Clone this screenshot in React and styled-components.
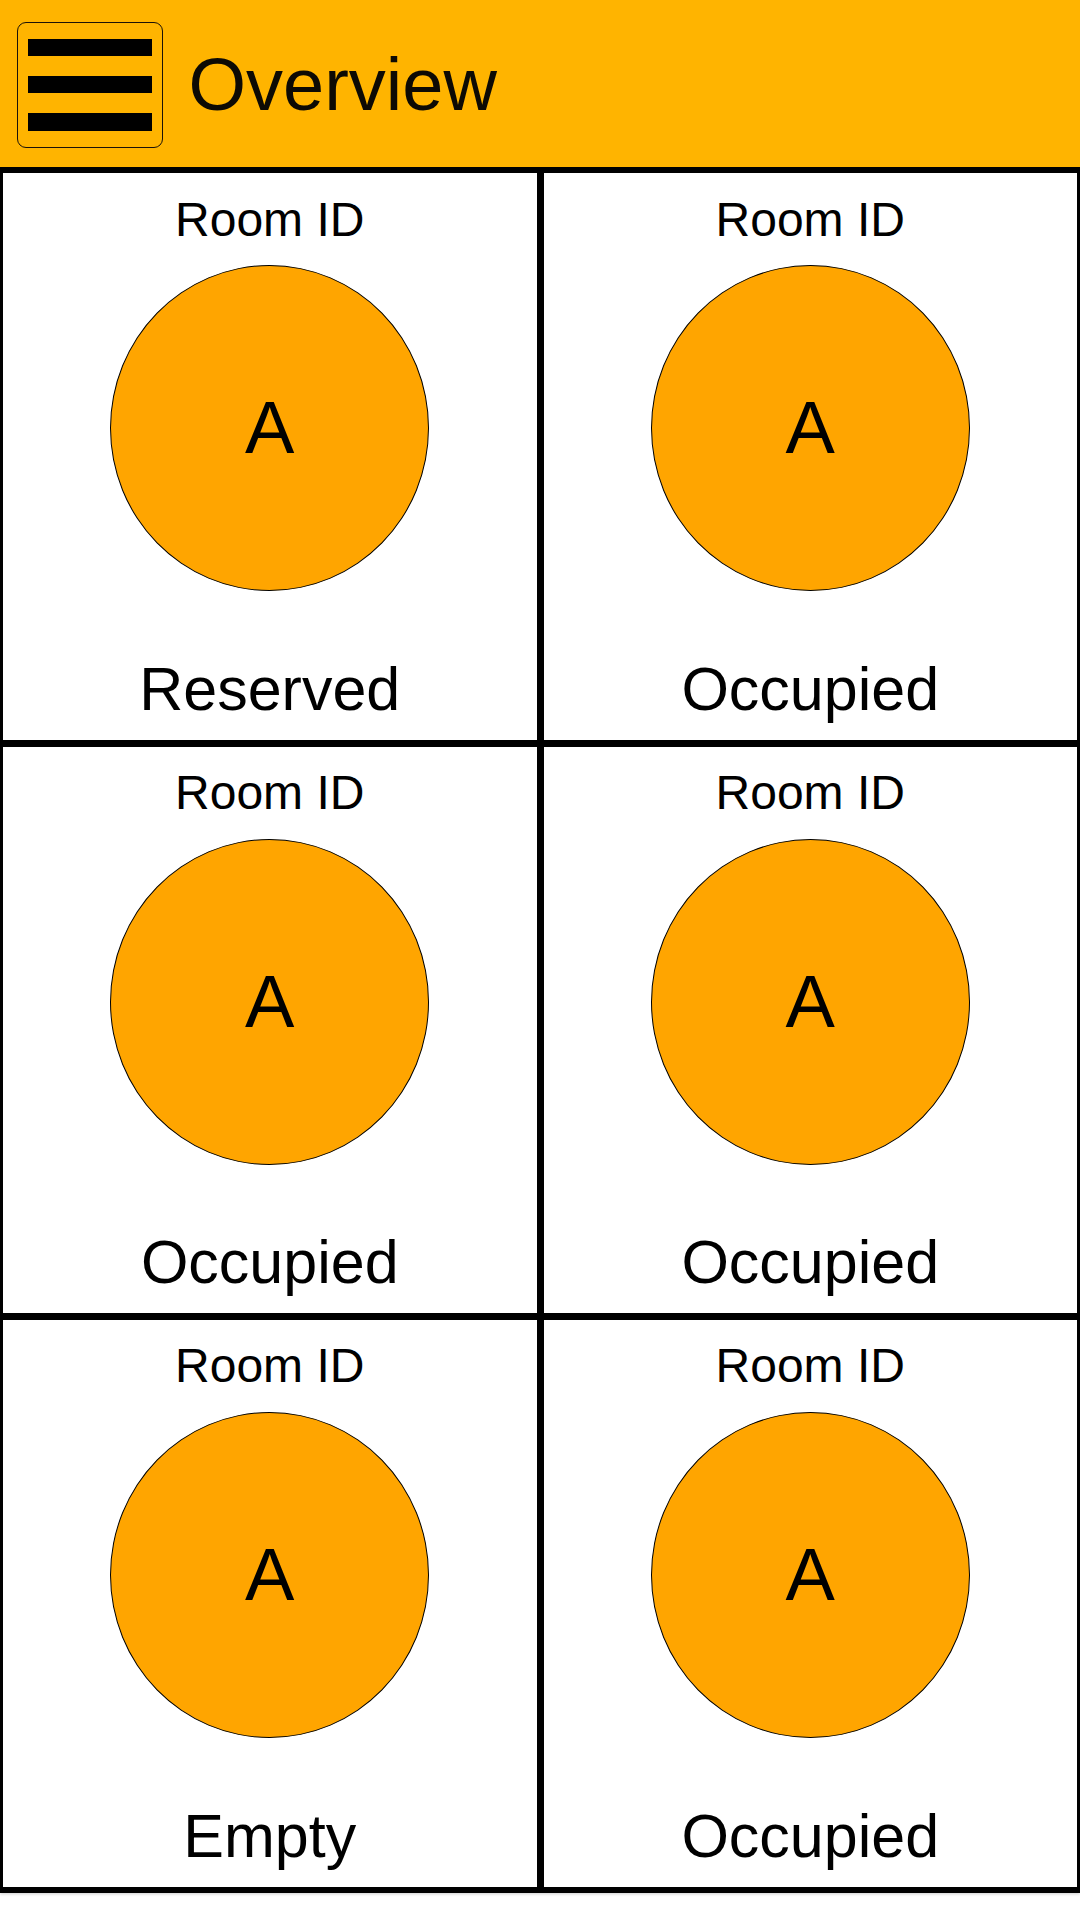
import React from "react";
import styled, { createGlobalStyle } from "styled-components";

const GlobalStyle = createGlobalStyle`
	html, body {
		margin: 0;
		padding: 0;
		background: #ffffff;
		font-family: "Liberation Sans", Arial, sans-serif;
	}
`;

const rooms = [
	{ id: 1, letter: "A", status: "Reserved" },
	{ id: 2, letter: "A", status: "Occupied" },
	{ id: 3, letter: "A", status: "Occupied" },
	{ id: 4, letter: "A", status: "Occupied" },
	{ id: 5, letter: "A", status: "Empty" },
	{ id: 6, letter: "A", status: "Occupied" },
];

const App = () => {
	return (
		<Page>
			<GlobalStyle />
			<Header>
				<MenuButton aria-label="menu">
					<Bar />
					<Bar />
					<Bar />
				</MenuButton>
				<Title>Overview</Title>
			</Header>
			<Grid>
				{rooms.map((room) => (
					<Cell key={room.id}>
						<RoomId>Room ID</RoomId>
						<Circle>{room.letter}</Circle>
						<Status>{room.status}</Status>
					</Cell>
				))}
			</Grid>
		</Page>
	);
};

const Page = styled.div`
	width: 1080px;
	min-height: 1921px;
	background: #ffffff;
`;

const Header = styled.header`
	position: relative;
	z-index: 1;
	height: 166.67px;
	box-sizing: border-box;
	display: flex;
	align-items: center;
	gap: 26px;
	padding: 3px 0 0 16.5px;
	background-color: #ffb400;
	box-shadow: 0 2px 4px rgba(0, 0, 0, 0.3);
`;

const MenuButton = styled.button`
	width: 146px;
	height: 126px;
	box-sizing: border-box;
	display: flex;
	flex-direction: column;
	justify-content: center;
	gap: 20px;
	padding: 0 10px;
	background: transparent;
	border: 1.5px solid #1a1208;
	border-radius: 9px;
`;

const Bar = styled.span`
	display: block;
	height: 17.33px;
	background: #000000;
`;

const Title = styled.h1`
	margin: 0;
	font-size: 74px;
	font-weight: normal;
	line-height: 74px;
	color: #0d0a04;
`;

const Grid = styled.main`
	display: grid;
	grid-template-columns: 1fr 1fr;
	grid-auto-rows: 566.67px;
	column-gap: 7px;
	row-gap: 6.67px;
	padding: 6.67px 3px;
	background: #000000;
	box-shadow: 0 1px 3px rgba(0, 0, 0, 0.2);
`;

const Cell = styled.section`
	display: flex;
	flex-direction: column;
	align-items: center;
	padding: 22.4px 0 20px;
	box-sizing: border-box;
	background: #ffffff;
	color: #000000;
`;

const RoomId = styled.div`
	font-size: 48px;
	line-height: 48px;
`;

const Circle = styled.div`
	width: 319px;
	height: 326px;
	margin-top: 21.7px;
	box-sizing: border-box;
	border: 1px solid #000000;
	border-radius: 50%;
	background: #ffa500;
	display: flex;
	align-items: center;
	justify-content: center;
	font-size: 74px;
	line-height: 1;
`;

const Status = styled.div`
	margin-top: auto;
	font-size: 61px;
	line-height: 61px;
`;

export default App;
